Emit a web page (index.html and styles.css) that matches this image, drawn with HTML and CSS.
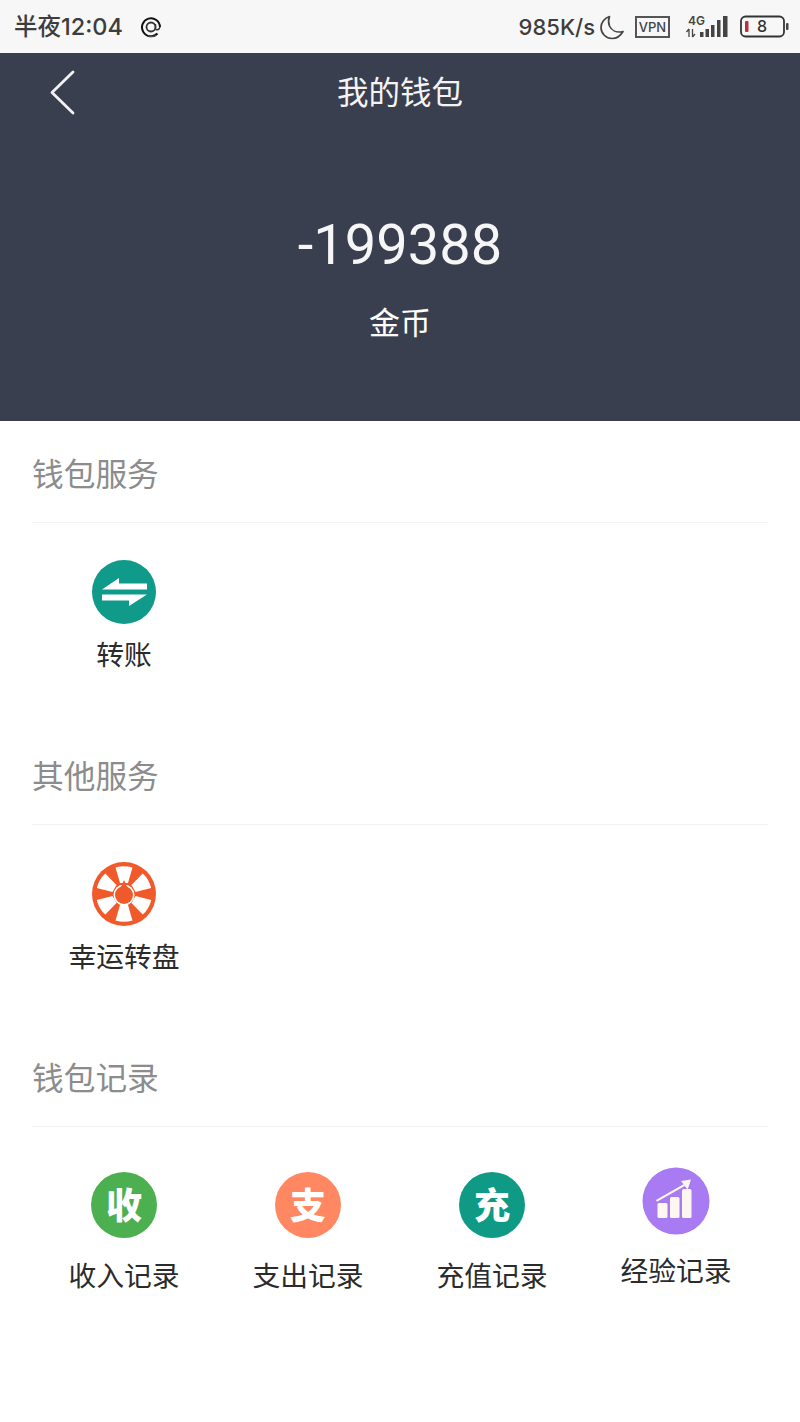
FILE: index.html
```html
<!DOCTYPE html>
<html lang="zh-CN">
<head>
<meta charset="utf-8">
<title>我的钱包</title>
<link rel="stylesheet" href="styles.css">
</head>
<body>
<div class="status">
  <div class="status-left">
    <span class="clock">半夜12:04</span>
    <svg class="at" viewBox="0 0 22 22" width="22" height="22"><path d="M17.500 17.500A9 9 0 1 1 20 11" fill="none" stroke="#111" stroke-width="2"/><circle cx="11" cy="11" r="4.500" fill="none" stroke="#333" stroke-width="1.800"/><path d="M15.500 8v4.500c0 2 3.500 2 4.500-1.500" fill="none" stroke="#333" stroke-width="1.400"/><path d="M8 19.800c3 1 6 .8 8.500-.6" fill="none" stroke="#555" stroke-width="1.200"/></svg>
  </div>
  <div class="status-right">
    <span class="speed">985K/s</span>
    <svg class="moon" viewBox="0 0 26 26" width="26" height="26"><path d="M10.500 2.500C5.500 4 2 8.500 2 13.500 2 19.500 7 24.500 13 24.500c4.500 0 8.500-2.700 11-7-6.500 1.500-11.500-1-13.500-5.500-1.200-3-1.200-6.500 0-9.500z" fill="none" stroke="#444" stroke-width="1.700" stroke-linejoin="round"/></svg>
    <span class="vpn">VPN</span>
    <svg class="signal" viewBox="0 -6 44 30" width="44" height="30"><text x="2" y="10" class="signal-text">4G</text><path d="M3 14v8M0.500 17l2.500-3M6.500 14v8M6.500 22l2.500-3" fill="none" stroke="#444" stroke-width="1.300"/><path d="M14 17h3.500v5h-3.500zM19.500 14h3.500v8h-3.500zM25 10h3.500v12h-3.500zM31 5h3.500v17h-3.500zM37 1h4.500v21h-4.500z" fill="#444"/></svg>
    <svg class="battery" viewBox="0 0 50 23" width="50" height="23"><rect x="1" y="1.500" width="43" height="20" rx="4.500" fill="none" stroke="#333" stroke-width="1.800"/><rect x="5" y="6" width="3.500" height="11" rx="1" fill="#b5333a"/><text x="22" y="17" class="battery-text">8</text><rect x="46" y="8" width="2.500" height="7" rx="1" fill="#444"/></svg>
  </div>
</div>
<header class="hero">
  <div class="nav">
    <svg class="back" viewBox="0 0 28 46" width="28" height="46"><path d="M25 3 4 23.500 25 44" fill="none" stroke="#f2f2f2" stroke-width="2.800" stroke-linecap="round" stroke-linejoin="round"/></svg>
    <h1 class="title">我的钱包</h1>
  </div>
  <div class="balance">-199388</div>
  <div class="unit">金币</div>
</header>
<main>
  <section class="section">
    <h2 class="section-title">钱包服务</h2>
    <div class="grid">
      <div class="item">
        <svg class="icon" viewBox="0 0 64 64" width="64" height="64"><circle cx="32" cy="32" r="32" fill="#0f9a8a"/><path d="M10 29.500 27 18v5.500h28v6z M10 34.500h45L37 46v-5.500H10z" fill="#fff"/></svg>
        <span class="label">转账</span>
      </div>
    </div>
  </section>
  <section class="section">
    <h2 class="section-title">其他服务</h2>
    <div class="grid">
      <div class="item">
        <svg class="icon" viewBox="0 0 64 64" width="64" height="64"><circle cx="32" cy="32" r="32" fill="#f0592a"/><g fill="#fff"><path id="w" d="M23.500 5.500a28 28 0 0 1 17 0L36 21h-8z"/><use href="#w" transform="rotate(60 32 32)"/><use href="#w" transform="rotate(120 32 32)"/><use href="#w" transform="rotate(180 32 32)"/><use href="#w" transform="rotate(240 32 32)"/><use href="#w" transform="rotate(300 32 32)"/></g><circle cx="32" cy="33" r="10.500" fill="#fff"/><path d="M32 18l3 7h-6z" fill="#f0592a"/><circle cx="32" cy="33" r="9" fill="#f0592a"/></svg>
        <span class="label">幸运转盘</span>
      </div>
    </div>
  </section>
  <section class="section">
    <h2 class="section-title">钱包记录</h2>
    <div class="grid grid-records">
      <div class="item">
        <span class="badge badge-green">收</span>
        <span class="label label-record">收入记录</span>
      </div>
      <div class="item">
        <span class="badge badge-orange">支</span>
        <span class="label label-record">支出记录</span>
      </div>
      <div class="item">
        <span class="badge badge-teal">充</span>
        <span class="label label-record">充值记录</span>
      </div>
      <div class="item item-raised">
        <svg class="icon-xp" viewBox="0 0 68 68" width="68" height="68"><circle cx="34" cy="34" r="33.500" fill="#a87bf2"/><g fill="#fdf7f2"><rect x="15.500" y="36" width="10" height="15" rx="1.500"/><rect x="28" y="30" width="9.500" height="21" rx="1.500"/><rect x="40" y="22" width="9.500" height="29" rx="1.500"/><path d="M49 12.500 39 14l2.500 3.200L14 33l1 1.800 27.700-15.800 3 3.500z"/></g></svg>
        <span class="label label-xp">经验记录</span>
      </div>
    </div>
  </section>
</main>
</body>
</html>
```
FILE: styles.css
```css
* { box-sizing: border-box; }
html, body { margin: 0; padding: 0; }
body {
  width: 800px;
  height: 1422px;
  background: #fff;
  overflow: hidden;
  font-family: "Noto Sans CJK SC", "Noto Sans", sans-serif;
}
.status {
  height: 53px;
  background: #f7f7f7;
  display: flex;
  justify-content: space-between;
  align-items: center;
  padding: 0 10px 0 14px;
  color: #3d3d3d;
}
.status-left, .status-right { display: flex; align-items: center; }
.clock { font: 500 23.500px/1 Inter, "Noto Sans CJK SC", sans-serif; }
.at { margin-left: 17px; }
.speed { font: 500 22px/1 Inter, sans-serif; }
.moon { margin-left: 4px; }
.vpn {
  margin-left: 10px;
  width: 35px;
  height: 22px;
  border: 2px solid #555;
  font: 500 13px/18px Inter, sans-serif;
  text-align: center;
  color: #444;
}
.signal { margin-left: 16px; margin-top: -6px; }
.signal-text { font: 600 12px Inter, sans-serif; fill: #444; }
.battery { margin-left: 10px; }
.battery-text { font: 500 16px Inter, sans-serif; fill: #333; text-anchor: middle; }
.hero {
  height: 368px;
  background: #3a3f4f;
  color: #fff;
  display: flex;
  flex-direction: column;
  align-items: center;
}
.nav {
  width: 100%;
  height: 78px;
  display: flex;
  justify-content: center;
  align-items: center;
  position: relative;
}
.back { position: absolute; left: 48px; top: 16px; }
.title { margin: 0 0 4px; font-size: 31.500px; font-weight: 400; line-height: 74px; color: #f4f4f4; }
.balance { margin-top: 78px; font: 400 56px/72px Roboto, sans-serif; color: #f6f6f6; }
.unit { margin-top: 18px; font-size: 31px; line-height: 44px; }
.section { height: 302px; padding: 0 32px; }
.section-title {
  margin: 0;
  height: 102px;
  padding-top: 28px;
  font-size: 31.700px;
  font-weight: 400;
  line-height: 46px;
  color: #8c8c8c;
  border-bottom: 1px solid #f3f3f3;
}
.grid { display: grid; grid-template-columns: repeat(4, 184px); }
.item { display: flex; flex-direction: column; align-items: center; padding-top: 37px; }
.icon { display: block; }
.label { margin-top: 9px; font-size: 27.800px; line-height: 40px; color: #2b2b2b; white-space: nowrap; }
.grid-records .item { padding-top: 45px; }
.badge {
  width: 66px;
  height: 66px;
  border-radius: 50%;
  color: #fff;
  font-size: 36px;
  font-weight: 900;
  line-height: 62px;
  text-align: center;
}
.badge-green { background: #4caf50; }
.badge-orange { background: #ff8762; }
.badge-teal { background: #0f9a86; }
.label-record { margin-top: 16px; }
.grid-records .item-raised { padding-top: 40px; }
.icon-xp { display: block; }
.label-xp { margin-top: 14px; }
```
